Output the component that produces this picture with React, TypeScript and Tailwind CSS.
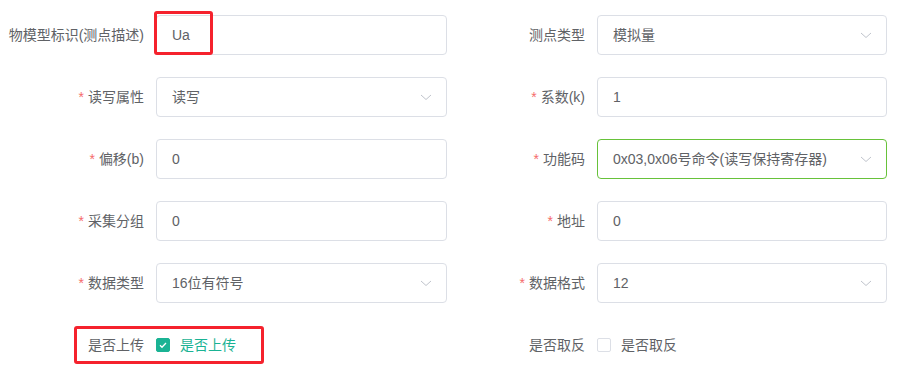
import { ReactNode } from 'react';

const font = { fontFamily: '"Liberation Sans", "Noto Sans CJK SC", sans-serif' };

function Label({ text, required, width }: { text: string; required?: boolean; width: string }) {
  return (
    <label className={`${width} shrink-0 pr-3 text-right text-[14px] leading-[40px] text-[#606266] whitespace-nowrap`}>
      {required && <span className="mr-1 text-[#f56c6c]">*</span>}
      {text}
    </label>
  );
}

function Chevron() {
  return (
    <svg className="absolute right-[14px] top-1/2 -translate-y-1/2" width="12" height="12" viewBox="0 0 12 12" fill="none">
      <path d="M1 4l5 4.5L11 4" stroke="#c0c4cc" strokeWidth="1" />
    </svg>
  );
}

function Field({ value, select, focused }: { value: string; select?: boolean; focused?: boolean }) {
  return (
    <div
      className={`relative h-10 flex-1 rounded-[4px] border bg-white px-[15px] text-[14px] leading-[38px] text-[#606266] ${
        focused ? 'border-[#67c23a]' : 'border-[#dcdfe6]'
      }`}
    >
      {value}
      {select && <Chevron />}
    </div>
  );
}

function Checkbox({ checked, text }: { checked?: boolean; text: string }) {
  return (
    <div className="flex h-10 items-center">
      <span
        className={`flex h-[14px] w-[14px] items-center justify-center rounded-[2px] border ${
          checked ? 'border-[#1ab394] bg-[#1ab394]' : 'border-[#dcdfe6] bg-white'
        }`}
      >
        {checked && (
          <svg width="10" height="10" viewBox="0 0 10 10" fill="none">
            <path d="M2 5.2l2 2L8 3" stroke="white" strokeWidth="1.3" />
          </svg>
        )}
      </span>
      <span className={`pl-[10px] text-[14px] ${checked ? 'text-[#1ab394]' : 'text-[#606266]'}`}>{text}</span>
    </div>
  );
}

function Item({ left, children, labelWidth }: { left: ReactNode; children: ReactNode; labelWidth?: string }) {
  return (
    <div className="flex items-center">
      {left}
      {children}
    </div>
  );
}

export default function App() {
  return (
    <div className="relative h-[376px] w-[906px] overflow-hidden bg-white" style={font}>
      <div className="grid grid-cols-[447px_440px] gap-y-[22px] pt-[15px]">
        <Item left={<Label text="物模型标识(测点描述)" width="w-[156px]" />}>
          <Field value="Ua" />
        </Item>
        <Item left={<Label text="测点类型" width="w-[150px]" />}>
          <Field value="模拟量" select />
        </Item>

        <Item left={<Label text="读写属性" required width="w-[156px]" />}>
          <Field value="读写" select />
        </Item>
        <Item left={<Label text="系数(k)" required width="w-[150px]" />}>
          <Field value="1" />
        </Item>

        <Item left={<Label text="偏移(b)" required width="w-[156px]" />}>
          <Field value="0" />
        </Item>
        <Item left={<Label text="功能码" required width="w-[150px]" />}>
          <Field value="0x03,0x06号命令(读写保持寄存器)" select focused />
        </Item>

        <Item left={<Label text="采集分组" required width="w-[156px]" />}>
          <Field value="0" />
        </Item>
        <Item left={<Label text="地址" required width="w-[150px]" />}>
          <Field value="0" />
        </Item>

        <Item left={<Label text="数据类型" required width="w-[156px]" />}>
          <Field value="16位有符号" select />
        </Item>
        <Item left={<Label text="数据格式" required width="w-[150px]" />}>
          <Field value="12" select />
        </Item>

        <Item left={<Label text="是否上传" width="w-[156px]" />}>
          <Checkbox checked text="是否上传" />
        </Item>
        <Item left={<Label text="是否取反" width="w-[150px]" />}>
          <Checkbox text="是否取反" />
        </Item>
      </div>

      {/* red annotation boxes */}
      <div className="pointer-events-none absolute left-[154px] top-[11px] h-[44px] w-[59px] rounded-[3px] border-[3px] border-[#f5222d]" />
      <div className="pointer-events-none absolute left-[74px] top-[326px] h-[38px] w-[190px] rounded-[3px] border-[3px] border-[#f5222d]" />
    </div>
  );
}
